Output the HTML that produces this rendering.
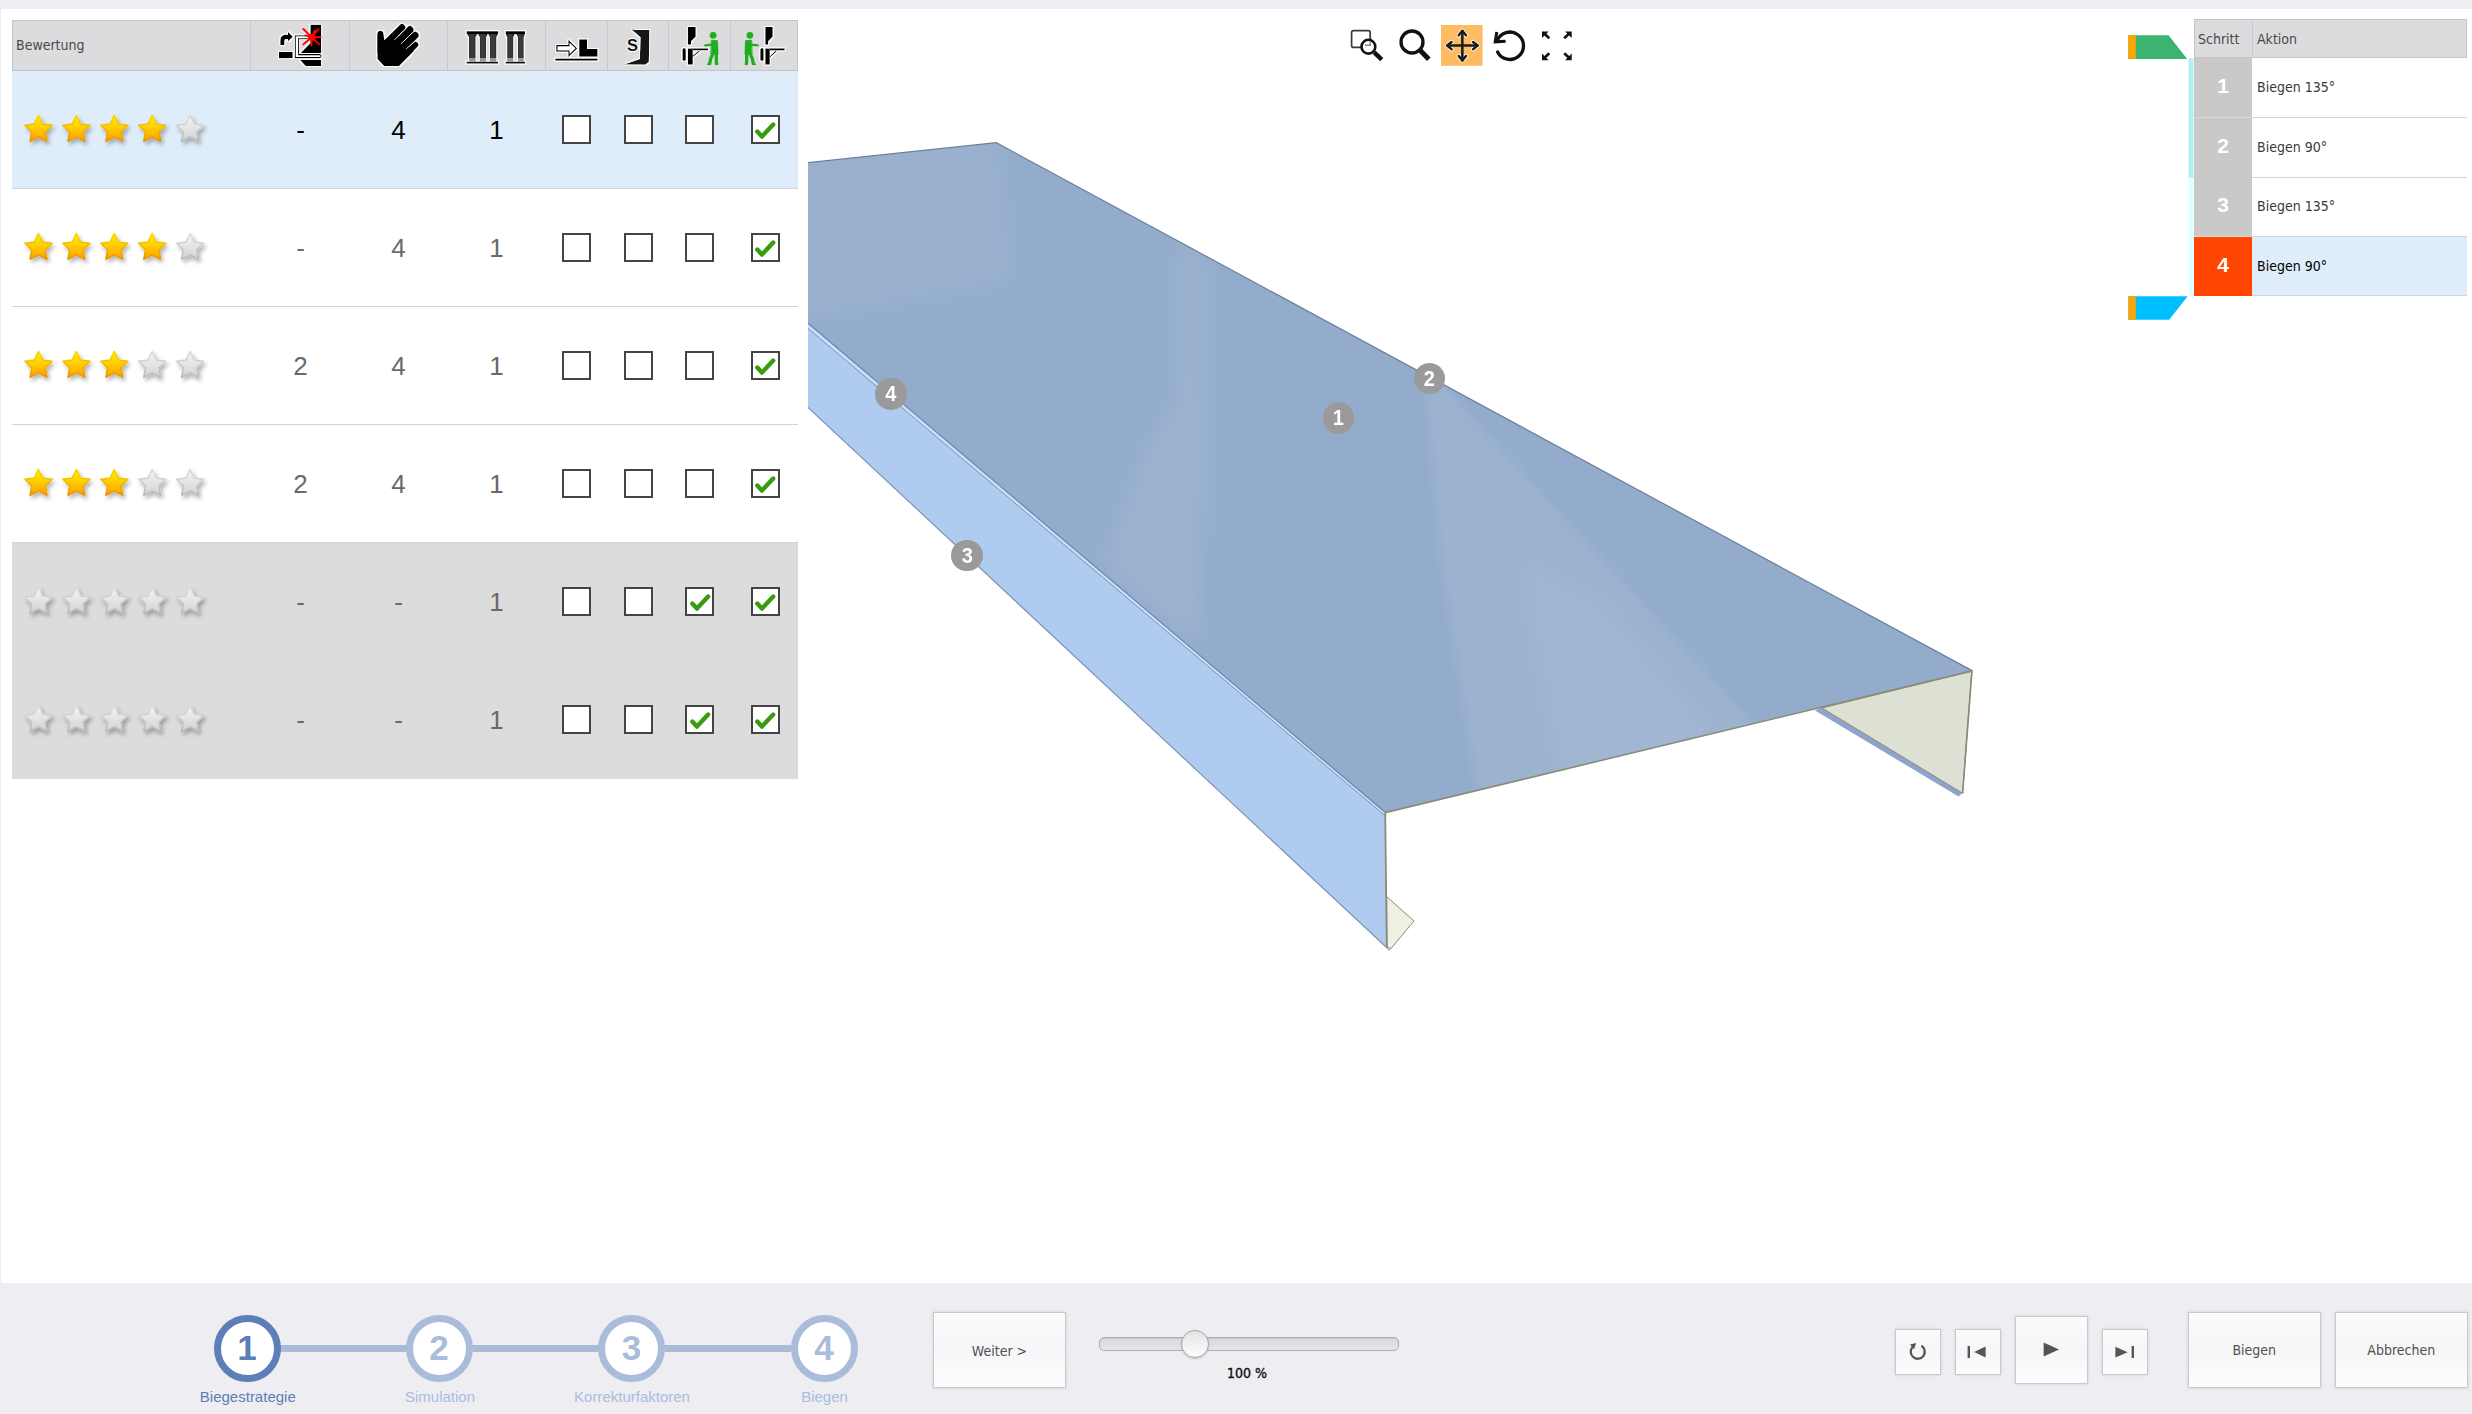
<!DOCTYPE html>
<html lang="de">
<head>
<meta charset="utf-8">
<title>Biegestrategie</title>
<style>
*{box-sizing:border-box;margin:0;padding:0}
html,body{width:2472px;height:1414px;overflow:hidden;background:#fff}
body{position:relative;font-family:"Liberation Sans","DejaVu Sans",sans-serif;color:#333}
.abs{position:absolute}
.tah{font-family:"DejaVu Sans Condensed","Liberation Sans",sans-serif}
#topbar{left:0;top:0;width:2472px;height:9px;background:#ededf2}
#leftstrip{left:0;top:0;width:1px;height:1283px;background:#ededf2}
#bottombar{left:0;top:1283px;width:2472px;height:131px;background:#ededf2}
#thead{left:12px;top:20px;width:786px;height:51px;background:#dcdcde;border:1px solid #c3c3ca}
.vsep{position:absolute;top:0;width:1px;height:49px;background:#c9c9d3}
.row{position:absolute;left:12px;width:786px;height:118px}
.row.sel{background:#dfecfa}
.row.dis{background:#dcdcdc}
.row.line{border-bottom:1px solid #d4d4d8}
.num{position:absolute;top:0;height:118px;line-height:118px;font-size:26px;text-align:center;color:#6a6a6a;width:60px}
.row.sel .num{color:#000}
.cb{position:absolute;top:44px;width:29px;height:29px;border:2.5px solid #444;background:#fff}
.cb svg{position:absolute;left:-2.5px;top:-2.5px}
.stars{position:absolute;left:8px;top:36px}
#shead{left:2194px;top:19px;width:273px;height:39px;background:#dcdcde;border:1px solid #c3c3ca}
.srow{position:absolute;left:2194px;width:273px;height:60px}
.srow .n{position:absolute;left:0;top:0;width:58px;height:60px;background:#c9c9c9;color:#fff;font-weight:bold;font-size:21px;text-align:center;line-height:56px;border-bottom:1px solid #dadada}
.srow .a{position:absolute;left:58px;top:0;width:215px;height:60px;line-height:58px;padding-left:5px;font-size:14px;color:#3a3a3a;border-bottom:1px solid #d4d4d8}
.srow.cur .n{background:#ff4500;border-bottom-color:#ff4500}
.srow.cur .a{background:#dfecfa;color:#000}
.btn{position:absolute;border:1px solid #c9c9ce;background:linear-gradient(#fbfbfc,#f6f6f8 50%,#fdfdfe);box-shadow:0 0 3px rgba(0,0,0,.13);text-align:center;font-size:14px;color:#505050}
.step{position:absolute;top:1315px;width:67px;height:67px;border-radius:50%;border:7px solid #a9bddb;background:#fff;color:#a9bddb;font-weight:bold;font-size:35px;text-align:center;line-height:51px}
.step.act{border-color:#5b7fb6;color:#5b7fb6}
.slabel{position:absolute;top:1388px;width:200px;text-align:center;font-size:15px;color:#a9bddb}
.marker{position:absolute;width:31.6px;height:31.6px;border-radius:50%;background:#9a9a9a;color:#fff;font-weight:bold;font-size:20px;line-height:30.4px;text-align:center}
.marker span{display:inline-block;transform:scaleY(1.14)}
</style>
</head>
<body>
<div id="topbar" class="abs"></div>
<div id="leftstrip" class="abs"></div>
<!-- 3D VIEW -->
<svg class="abs" style="left:808px;top:100px" width="1300" height="900" viewBox="808 100 1300 900">
<defs>
<linearGradient id="gTop" x1="808" y1="0" x2="1972" y2="0" gradientUnits="userSpaceOnUse">
<stop offset="0" stop-color="#97acce"/><stop offset="1" stop-color="#97acce"/>
</linearGradient>
<filter id="blur8" x="-30%" y="-30%" width="160%" height="160%"><feGaussianBlur stdDeviation="13"/></filter>
<filter id="blur6" x="-30%" y="-30%" width="160%" height="160%"><feGaussianBlur stdDeviation="7"/></filter>
<clipPath id="clipTop"><polygon points="808,162.7 996.3,142.7 1972,670.6 1385.1,812.3 808,323.3"/></clipPath>
</defs>
<!-- back lip strip -->
<polygon points="1815,710.5 1824,706.5 1963.5,792 1958.5,796.5" fill="#8ea4c8"/>
<!-- inner right face -->
<polygon points="1822,708 1971.7,671.2 1962.6,793.2" fill="#dde1d3" stroke="#8c8c7c" stroke-width="1"/>
<!-- top face -->
<polygon points="808,162.7 996.3,142.7 1972,670.6 1385.1,812.3 808,323.3" fill="#93accc"/>
<g clip-path="url(#clipTop)" fill="#fff">
<polygon filter="url(#blur8)" points="1178,232 1206,250 1207,450 1202,650 1100,565 1148,440 1176,400" opacity=".085"/>
<polygon filter="url(#blur6)" points="1424,376 1442,384 1765,735 1478,800 1440,560" opacity=".085"/>
<polygon filter="url(#blur8)" points="1520,560 1600,600 1720,740 1560,780" opacity=".05"/>
<polygon filter="url(#blur8)" points="770,130 1000,125 1020,285 770,330" opacity=".06"/>
</g>
<polyline points="808,162.7 996.3,142.7 1972,670.6" fill="none" stroke="#6d7f9c" stroke-width="1.2"/>
<polyline points="1385.1,812.6 1972,670.9 1962.6,793.2" fill="none" stroke="#8a8a78" stroke-width="1.6"/>
<!-- front face -->
<polygon points="808,327.5 1385.3,815.5 1386.6,947.5 808,407.4" fill="#afcbf0"/>
<line x1="808" y1="407.4" x2="1386.6" y2="947.5" stroke="#7d93b6" stroke-width="1.2"/>
<!-- bevel -->
<polygon points="808,323.3 1385.1,812.3 1385.4,816 808,328.4" fill="#c8defa"/>
<line x1="808" y1="323.3" x2="1385.1" y2="812.3" stroke="#6c82a6" stroke-width="1.2"/>
<line x1="808" y1="328.4" x2="1385.4" y2="816" stroke="#7a91b6" stroke-width="1"/>
<!-- inner lip -->
<polygon points="1386.6,896.5 1414,921 1391,948.5 1387,948" fill="#eef0e4" stroke="#8c8c7c" stroke-width="1"/>
<polygon points="1386.6,947 1391,948.5 1389,950.5" fill="#d8dcd0" stroke="#8c8c7c" stroke-width=".8"/>
<line x1="1385.2" y1="813" x2="1386.8" y2="948" stroke="#8a8a76" stroke-width="1.8"/>
</svg>
<div class="marker" style="left:1322.6px;top:402.0px"><span>1</span></div>
<div class="marker" style="left:1413.6px;top:362.7px"><span>2</span></div>
<div class="marker" style="left:951.4px;top:539.5px"><span>3</span></div>
<div class="marker" style="left:875.0px;top:378.4px"><span>4</span></div>
<!-- RATING TABLE -->
<svg width="0" height="0" style="position:absolute"><defs>
<linearGradient id="gy" x1="0" y1="0" x2="0" y2="1"><stop offset="0" stop-color="#fff000"/><stop offset=".45" stop-color="#ffd000"/><stop offset="1" stop-color="#ff9d00"/></linearGradient>
<linearGradient id="gys" x1="0" y1="0" x2="0" y2="1"><stop offset="0" stop-color="#f8dc00"/><stop offset="1" stop-color="#e79300"/></linearGradient>
<linearGradient id="gg" x1="0" y1="0" x2="0" y2="1"><stop offset="0" stop-color="#f6f6f6"/><stop offset="1" stop-color="#d2d2d2"/></linearGradient>
<linearGradient id="ggs" x1="0" y1="0" x2="0" y2="1"><stop offset="0" stop-color="#dedede"/><stop offset="1" stop-color="#b8b8b8"/></linearGradient>
<filter id="sh" x="-30%" y="-30%" width="170%" height="170%"><feGaussianBlur in="SourceAlpha" stdDeviation="1.9"/><feOffset dx="1.8" dy="2.6"/><feComponentTransfer><feFuncA type="linear" slope=".30"/></feComponentTransfer><feMerge><feMergeNode/><feMergeNode in="SourceGraphic"/></feMerge></filter>
<path id="st" d="M15.00,1.40 L19.17,9.96 L28.60,11.28 L21.75,17.89 L23.41,27.27 L15.00,22.80 L6.59,27.27 L8.25,17.89 L1.40,11.28 L10.83,9.96Z" stroke-width="1.5" stroke-linejoin="round"/>
</defs></svg>
<div id="thead" class="abs">
<div class="abs tah" style="left:3px;top:0;line-height:49px;font-size:14px;color:#4a4a4a">Bewertung</div>
<div class="vsep" style="left:237px"></div>
<div class="vsep" style="left:336px"></div>
<div class="vsep" style="left:434px"></div>
<div class="vsep" style="left:532px"></div>
<div class="vsep" style="left:594px"></div>
<div class="vsep" style="left:655px"></div>
<div class="vsep" style="left:717px"></div>
<!--ICONS-->
</div>
<div class="row sel line" style="top:71px">
<svg class="stars" width="200" height="44" viewBox="0 0 200 44"><g filter="url(#sh)"><use href="#st" x="3.5" y="7" fill="url(#gy)" stroke="url(#gys)"/><use href="#st" x="41.4" y="7" fill="url(#gy)" stroke="url(#gys)"/><use href="#st" x="79.3" y="7" fill="url(#gy)" stroke="url(#gys)"/><use href="#st" x="117.2" y="7" fill="url(#gy)" stroke="url(#gys)"/><use href="#st" x="155.1" y="7" fill="url(#gg)" stroke="url(#ggs)"/></g></svg>
<div class="num" style="left:258.5px">-</div>
<div class="num" style="left:356.5px">4</div>
<div class="num" style="left:454.5px">1</div>
<div class="cb" style="left:550.0px"></div>
<div class="cb" style="left:612.0px"></div>
<div class="cb" style="left:673.0px"></div>
<div class="cb" style="left:738.5px"><svg width="29" height="29"><path d="M7.3,16.6 L11.9,21.6 L23.2,9.6" fill="none" stroke="#389b10" stroke-width="4.4" stroke-linecap="round" stroke-linejoin="round"/></svg></div>
</div>
<div class="row line" style="top:189px">
<svg class="stars" width="200" height="44" viewBox="0 0 200 44"><g filter="url(#sh)"><use href="#st" x="3.5" y="7" fill="url(#gy)" stroke="url(#gys)"/><use href="#st" x="41.4" y="7" fill="url(#gy)" stroke="url(#gys)"/><use href="#st" x="79.3" y="7" fill="url(#gy)" stroke="url(#gys)"/><use href="#st" x="117.2" y="7" fill="url(#gy)" stroke="url(#gys)"/><use href="#st" x="155.1" y="7" fill="url(#gg)" stroke="url(#ggs)"/></g></svg>
<div class="num" style="left:258.5px">-</div>
<div class="num" style="left:356.5px">4</div>
<div class="num" style="left:454.5px">1</div>
<div class="cb" style="left:550.0px"></div>
<div class="cb" style="left:612.0px"></div>
<div class="cb" style="left:673.0px"></div>
<div class="cb" style="left:738.5px"><svg width="29" height="29"><path d="M7.3,16.6 L11.9,21.6 L23.2,9.6" fill="none" stroke="#389b10" stroke-width="4.4" stroke-linecap="round" stroke-linejoin="round"/></svg></div>
</div>
<div class="row line" style="top:307px">
<svg class="stars" width="200" height="44" viewBox="0 0 200 44"><g filter="url(#sh)"><use href="#st" x="3.5" y="7" fill="url(#gy)" stroke="url(#gys)"/><use href="#st" x="41.4" y="7" fill="url(#gy)" stroke="url(#gys)"/><use href="#st" x="79.3" y="7" fill="url(#gy)" stroke="url(#gys)"/><use href="#st" x="117.2" y="7" fill="url(#gg)" stroke="url(#ggs)"/><use href="#st" x="155.1" y="7" fill="url(#gg)" stroke="url(#ggs)"/></g></svg>
<div class="num" style="left:258.5px">2</div>
<div class="num" style="left:356.5px">4</div>
<div class="num" style="left:454.5px">1</div>
<div class="cb" style="left:550.0px"></div>
<div class="cb" style="left:612.0px"></div>
<div class="cb" style="left:673.0px"></div>
<div class="cb" style="left:738.5px"><svg width="29" height="29"><path d="M7.3,16.6 L11.9,21.6 L23.2,9.6" fill="none" stroke="#389b10" stroke-width="4.4" stroke-linecap="round" stroke-linejoin="round"/></svg></div>
</div>
<div class="row line" style="top:425px">
<svg class="stars" width="200" height="44" viewBox="0 0 200 44"><g filter="url(#sh)"><use href="#st" x="3.5" y="7" fill="url(#gy)" stroke="url(#gys)"/><use href="#st" x="41.4" y="7" fill="url(#gy)" stroke="url(#gys)"/><use href="#st" x="79.3" y="7" fill="url(#gy)" stroke="url(#gys)"/><use href="#st" x="117.2" y="7" fill="url(#gg)" stroke="url(#ggs)"/><use href="#st" x="155.1" y="7" fill="url(#gg)" stroke="url(#ggs)"/></g></svg>
<div class="num" style="left:258.5px">2</div>
<div class="num" style="left:356.5px">4</div>
<div class="num" style="left:454.5px">1</div>
<div class="cb" style="left:550.0px"></div>
<div class="cb" style="left:612.0px"></div>
<div class="cb" style="left:673.0px"></div>
<div class="cb" style="left:738.5px"><svg width="29" height="29"><path d="M7.3,16.6 L11.9,21.6 L23.2,9.6" fill="none" stroke="#389b10" stroke-width="4.4" stroke-linecap="round" stroke-linejoin="round"/></svg></div>
</div>
<div class="row dis" style="top:543px">
<svg class="stars" width="200" height="44" viewBox="0 0 200 44"><g filter="url(#sh)"><use href="#st" x="3.5" y="7" fill="url(#gg)" stroke="url(#ggs)"/><use href="#st" x="41.4" y="7" fill="url(#gg)" stroke="url(#ggs)"/><use href="#st" x="79.3" y="7" fill="url(#gg)" stroke="url(#ggs)"/><use href="#st" x="117.2" y="7" fill="url(#gg)" stroke="url(#ggs)"/><use href="#st" x="155.1" y="7" fill="url(#gg)" stroke="url(#ggs)"/></g></svg>
<div class="num" style="left:258.5px">-</div>
<div class="num" style="left:356.5px">-</div>
<div class="num" style="left:454.5px">1</div>
<div class="cb" style="left:550.0px"></div>
<div class="cb" style="left:612.0px"></div>
<div class="cb" style="left:673.0px"><svg width="29" height="29"><path d="M7.3,16.6 L11.9,21.6 L23.2,9.6" fill="none" stroke="#389b10" stroke-width="4.4" stroke-linecap="round" stroke-linejoin="round"/></svg></div>
<div class="cb" style="left:738.5px"><svg width="29" height="29"><path d="M7.3,16.6 L11.9,21.6 L23.2,9.6" fill="none" stroke="#389b10" stroke-width="4.4" stroke-linecap="round" stroke-linejoin="round"/></svg></div>
</div>
<div class="row dis" style="top:661px">
<svg class="stars" width="200" height="44" viewBox="0 0 200 44"><g filter="url(#sh)"><use href="#st" x="3.5" y="7" fill="url(#gg)" stroke="url(#ggs)"/><use href="#st" x="41.4" y="7" fill="url(#gg)" stroke="url(#ggs)"/><use href="#st" x="79.3" y="7" fill="url(#gg)" stroke="url(#ggs)"/><use href="#st" x="117.2" y="7" fill="url(#gg)" stroke="url(#ggs)"/><use href="#st" x="155.1" y="7" fill="url(#gg)" stroke="url(#ggs)"/></g></svg>
<div class="num" style="left:258.5px">-</div>
<div class="num" style="left:356.5px">-</div>
<div class="num" style="left:454.5px">1</div>
<div class="cb" style="left:550.0px"></div>
<div class="cb" style="left:612.0px"></div>
<div class="cb" style="left:673.0px"><svg width="29" height="29"><path d="M7.3,16.6 L11.9,21.6 L23.2,9.6" fill="none" stroke="#389b10" stroke-width="4.4" stroke-linecap="round" stroke-linejoin="round"/></svg></div>
<div class="cb" style="left:738.5px"><svg width="29" height="29"><path d="M7.3,16.6 L11.9,21.6 L23.2,9.6" fill="none" stroke="#389b10" stroke-width="4.4" stroke-linecap="round" stroke-linejoin="round"/></svg></div>
</div>
<!-- HEADER ICONS -->
<svg class="abs" style="left:250px;top:21px" width="547" height="49" viewBox="250 21 547 49">
<defs>
<filter id="glow" x="-10%" y="-10%" width="120%" height="120%"><feMorphology in="SourceAlpha" operator="dilate" radius=".9" result="d"/><feGaussianBlur in="d" stdDeviation=".5" result="b"/><feFlood flood-color="#fff" flood-opacity=".95"/><feComposite in2="b" operator="in"/><feMerge><feMergeNode/><feMergeNode in="SourceGraphic"/></feMerge></filter>
<linearGradient id="pil" x1="0" y1="0" x2="1" y2="0"><stop offset="0" stop-color="#1c1c1c"/><stop offset=".35" stop-color="#3c3c3c"/><stop offset=".7" stop-color="#383838"/><stop offset="1" stop-color="#1a1a1a"/></linearGradient>
</defs>
<!-- A: collision -->
<g filter="url(#glow)">
<polygon points="310.3,24.8 321.1,24.8 321.1,52.9 300.5,52.9 310.3,43" fill="#000"/>
<polygon points="300,60 321.1,60 321.1,66 305.4,66" fill="#000"/>
<rect x="279" y="52" width="13.8" height="6.2" fill="#000"/>
<path d="M280.2,44.9 V40.5 Q280.2,34.7 286,34.7 H288 V31.8 L292.9,36.7 L288,41.6 V38.9 H286.6 Q284.4,38.9 284.4,41.2 V44.9 Z" fill="#000"/>
<path d="M295.3,35.7 H313 Q314.6,35.7 314.6,37.2 Q314.6,38.7 313,38.7 H298.6 V54.6 H319.8 Q321.2,54.6 321.2,56.1 Q321.2,57.6 319.8,57.6 H295.3 Z" fill="#fff" stroke="#000" stroke-width="1.1"/>
</g>
<g stroke="#ff0000" stroke-width="1.9" stroke-linecap="round" fill="#ff0000">
<circle cx="311.8" cy="37.2" r="3.7" stroke="none"/>
<path d="M311.6,37.2 L303.4,29 M311.6,37.2 L318.6,29 M311.6,37.2 L320.6,37 M311.6,37.2 L319.2,44.4 M311.6,37.2 L311.4,45.2 M311.6,37.2 L303.4,44.4 M311.6,37.2 L315,30.6 M311.6,37.2 L305.4,35.4"/>
</g>
<!-- B: hand -->
<g filter="url(#glow)">
<polygon points="377.3,34 377.3,59 384,66 399.2,66 414,51 402,38 392,33 384.3,40.2 383.5,34" fill="#000"/>
<g stroke="#000" stroke-linecap="round" fill="none">
<line x1="380.4" y1="33.8" x2="380.4" y2="52" stroke-width="6.2"/>
<line x1="386" y1="43.4" x2="402" y2="27.4" stroke-width="6.9"/>
<line x1="392" y1="47.7" x2="409.9" y2="29.8" stroke-width="7.5"/>
<line x1="398" y1="52.4" x2="415" y2="35.4" stroke-width="7.5"/>
<line x1="402" y1="58" x2="415.3" y2="44.7" stroke-width="6.2"/>
</g>
</g>
<g stroke="#f2f2f2" stroke-width=".9" stroke-linecap="butt">
<line x1="394.5" y1="39.8" x2="406" y2="28.3"/>
<line x1="400.9" y1="43.9" x2="413.8" y2="31.4"/>
<line x1="406.2" y1="48.8" x2="415.2" y2="41.2"/>
</g>
<!-- C: pillars -->
<g filter="url(#glow)">
<rect x="466.5" y="31.1" width="31.7" height="3.2" fill="#000"/>
<rect x="466.5" y="61.6" width="31.6" height="2.1" fill="#111"/>
<rect x="505.6" y="31.1" width="19.4" height="3.2" fill="#000"/>
<rect x="505.6" y="61.6" width="19.4" height="2.1" fill="#111"/>
<g fill="url(#pil)">
<path d="M467.4,34 H477 Q476.6,36.4 475.7,37 V58 H469 V37 Q467.8,36.4 467.4,34Z"/>
<path d="M478.2,34 H487.6 Q487,36.4 486.1,37 V58 H479.8 V37 Q478.7,36.4 478.2,34Z"/>
<path d="M488.4,34 H497.8 Q497.4,36.4 496.4,37 V58 H489.9 V37 Q488.9,36.4 488.4,34Z"/>
<path d="M505.8,34 H514.6 Q514.2,36.4 513.3,37 V58 H507.1 V37 Q506.2,36.4 505.8,34Z"/>
<path d="M516.6,34 H524.8 Q524.6,36.4 523.8,37 V58 H518 V37 Q517,36.4 516.6,34Z"/>
</g>
<g fill="#9a9a9a">
<rect x="469" y="58" width="6.7" height="3.7"/><rect x="479.8" y="58" width="6.3" height="3.7"/><rect x="489.9" y="58" width="6.5" height="3.7"/>
<rect x="507.1" y="58" width="6.2" height="3.7"/><rect x="518" y="58" width="5.8" height="3.7"/>
</g>
</g>
<!-- D: arrow to L -->
<g filter="url(#glow)">
<path d="M579.1,39.2 H587 V49.1 H597.6 V56.8 H579.1Z" fill="#000"/>
<rect x="555.1" y="58.5" width="42.7" height="2.2" rx=".8" fill="#000"/>
<path d="M556.8,45.6 H568.9 V41 L576.4,48.4 L568.9,55.8 V51.2 H556.8Z" fill="#fff" stroke="#000" stroke-width="1.3" stroke-linejoin="miter"/>
</g>
<!-- E: S bracket -->
<g filter="url(#glow)">
<path d="M632.1,27.4 Q632.4,29.6 634.6,29.9 H649.4 L648.9,62 L645.2,64.7 L624,64.4 L639.8,59 L640.5,37.3 L632.6,30.4Z" fill="#151515"/>
</g>
<text x="632.4" y="51.4" text-anchor="middle" style="font-family:'Liberation Sans',sans-serif;font-weight:700;font-size:16.4px;paint-order:stroke" fill="#111" stroke="#fff" stroke-width="1.8" stroke-linejoin="round">S</text>
<!-- F: press + man -->
<g filter="url(#glow)">
<polygon points="687.9,27.1 695.8,27.1 695.8,36.8 691,41.6 691,44.7 687.9,44.7" fill="#000"/>
<rect x="687.9" y="48.4" width="5" height="16.3" fill="#000"/>
<rect x="682.4" y="48.1" width="3.5" height="12.8" rx="1.6" fill="#000"/>
<rect x="692.5" y="48.3" width="15.6" height="2.1" fill="#000"/>
<line x1="692.9" y1="56.3" x2="699.4" y2="51" stroke="#000" stroke-width="1.1"/>
</g>
<g fill="#1fae1f" stroke="#1fae1f" stroke-linejoin="round" stroke-linecap="round">
<circle cx="713.1" cy="35.3" r="3.35" stroke="none"/>
<polygon points="711.7,40.3 717.5,40.7 718,54.2 711.3,54.2" stroke-width=".9"/>
<polyline points="712.2,44.7 705.3,45.3" fill="none" stroke-width="2.3"/>
<polyline points="712.9,53.6 710.7,58.6 709.7,63.6" fill="none" stroke-width="3.3"/>
<polyline points="709.8,64 707.6,64.2" fill="none" stroke-width="1.5"/>
<polyline points="716.3,53.6 716.4,63.6" fill="none" stroke-width="3.3"/>
<polyline points="716.4,64.1 717.9,64.1" fill="none" stroke-width="1.4"/>
</g>
<!-- G: man + press -->
<g fill="#1fae1f" stroke="#1fae1f" stroke-linejoin="round" stroke-linecap="round">
<circle cx="749.9" cy="35.3" r="3.35" stroke="none"/>
<polygon points="751.3,40.3 745.5,40.7 745.0,54.2 751.7,54.2" stroke-width=".9"/>
<polyline points="750.8,44.7 757.7,45.3" fill="none" stroke-width="2.3"/>
<polyline points="750.1,53.6 752.3,58.6 753.3,63.6" fill="none" stroke-width="3.3"/>
<polyline points="753.2,64 755.4,64.2" fill="none" stroke-width="1.5"/>
<polyline points="746.7,53.6 746.6,63.6" fill="none" stroke-width="3.3"/>
<polyline points="746.6,64.1 745.1,64.1" fill="none" stroke-width="1.4"/>
</g>
<g filter="url(#glow)">
<polygon points="765.2,27.1 772.8,27.1 772.8,36.8 768.1,41.6 768.1,44.7 765.2,44.7" fill="#000"/>
<rect x="765.2" y="48.4" width="4.7" height="16.3" fill="#000"/>
<rect x="760.2" y="48.1" width="3.5" height="12.8" rx="1.6" fill="#000"/>
<rect x="769.5" y="48.3" width="15.4" height="2.1" rx=".8" fill="#000"/>
<line x1="769.9" y1="56.8" x2="776.2" y2="51" stroke="#000" stroke-width="1.1"/>
</g>
</svg>
<!-- TOOLBAR -->
<svg class="abs" style="left:1340px;top:20px" width="240" height="50" viewBox="1340 20 240 50">
<!-- zoom window -->
<rect x="1351.6" y="30.6" width="18.6" height="16.8" rx="2" fill="none" stroke="#3a3a3a" stroke-width="1.7"/>
<circle cx="1368.4" cy="46.7" r="6.9" fill="#fff" stroke="#111" stroke-width="2.6"/>
<path d="M1365,45.2 H1370.2 V41" fill="none" stroke="#8a8a8a" stroke-width="1.5"/>
<line x1="1374.2" y1="52.4" x2="1381.8" y2="59.6" stroke="#111" stroke-width="4.4"/>
<!-- magnifier -->
<circle cx="1412" cy="42" r="11" fill="none" stroke="#111" stroke-width="3.3"/>
<line x1="1420.3" y1="50.6" x2="1428.8" y2="59.2" stroke="#111" stroke-width="5"/>
<!-- move (active) -->
<rect x="1441" y="25" width="41.6" height="40.8" fill="#fdbb62"/>
<g fill="none" stroke="#fff" stroke-width="4.4" stroke-linecap="round" stroke-linejoin="round" opacity=".85">
<path d="M1458.75,35.3 L1462.35,30.9 L1465.9499999999998,35.3 M1458.75,56.0 L1462.35,60.4 L1465.9499999999998,56.0 M1451.5500000000002,41.949999999999996 L1447.15,45.55 L1451.5500000000002,49.15 M1473.1499999999999,41.949999999999996 L1477.55,45.55 L1473.1499999999999,49.15"/>
</g>
<g fill="none" stroke="#1c1c1c" stroke-width="2.5" stroke-linecap="round" stroke-linejoin="round">
<path d="M1462.35,30.9 V60.4 M1447.15,45.55 H1477.55"/>
<path d="M1458.75,35.3 L1462.35,30.9 L1465.9499999999998,35.3 M1458.75,56.0 L1462.35,60.4 L1465.9499999999998,56.0 M1451.5500000000002,41.949999999999996 L1447.15,45.55 L1451.5500000000002,49.15 M1473.1499999999999,41.949999999999996 L1477.55,45.55 L1473.1499999999999,49.15"/>
</g>
<!-- rotate -->
<path d="M1497.6,52 A13.7,13.7 0 1 0 1497.2,40.4" fill="none" stroke="#111" stroke-width="3.3" stroke-linecap="round"/>
<path d="M1496.8,32 L1495.2,41.8 L1505.6,41.2" fill="none" stroke="#111" stroke-width="3" stroke-linejoin="miter"/>
<!-- fullscreen -->
<g stroke="#111" stroke-width="2.6" fill="#111">
<line x1="1549.3" y1="38.3" x2="1544" y2="33.3"/><polygon points="1542,31.4 1548.6,31.4 1542,38" stroke="none"/>
<line x1="1564.2" y1="38.3" x2="1569.6" y2="33.3"/><polygon points="1571.7,31.4 1565.1,31.4 1571.7,38" stroke="none"/>
<line x1="1549.3" y1="53.2" x2="1544" y2="58.3"/><polygon points="1542,60.2 1548.6,60.2 1542,53.6" stroke="none"/>
<line x1="1564.2" y1="53.2" x2="1569.6" y2="58.3"/><polygon points="1571.7,60.2 1565.1,60.2 1571.7,53.6" stroke="none"/>
</g>
</svg>
<!-- STEP PANEL -->
<svg class="abs" style="left:2120px;top:30px" width="80" height="300" viewBox="2120 30 80 300">
<polygon points="2128.4,35.2 2168.6,35.2 2187.2,58.9 2128.4,58.9" fill="#3cb371"/>
<rect x="2128.4" y="35.2" width="7.4" height="23.7" fill="#ffa500"/>
<rect x="2188.5" y="58.5" width="5" height="119.5" fill="#b4eff0"/>
<rect x="2188.5" y="178" width="5" height="118" fill="#e2ffff"/>
<polygon points="2128.4,296.2 2187.6,296.2 2169.2,319.8 2128.4,319.8" fill="#00bfff"/>
<rect x="2128.4" y="296.2" width="7.4" height="23.6" fill="#ffa500"/>
</svg>
<div id="shead" class="abs tah">
  <div class="abs" style="left:3px;top:0;line-height:39px;font-size:14px;color:#4a4a4a">Schritt</div>
  <div class="abs" style="left:57px;top:0;width:1px;height:37px;background:#c9c9d3"></div>
  <div class="abs" style="left:62px;top:0;line-height:39px;font-size:14px;color:#4a4a4a">Aktion</div>
</div>
<div class="srow" style="top:58px"><div class="n">1</div><div class="a tah">Biegen 135°</div></div>
<div class="srow" style="top:118px"><div class="n">2</div><div class="a tah">Biegen 90°</div></div>
<div class="srow" style="top:177px"><div class="n">3</div><div class="a tah">Biegen 135°</div></div>
<div class="srow cur" style="top:237px;height:59px"><div class="n" style="height:59px">4</div><div class="a tah" style="height:59px">Biegen 90°</div></div>
<!-- BOTTOM BAR -->
<div id="bottombar" class="abs"></div>
<div class="abs" style="left:279px;top:1345.2px;width:512px;height:7px;background:#a8bcda"></div>
<div class="step act" style="left:213.5px">1</div>
<div class="step" style="left:405.5px">2</div>
<div class="step" style="left:598px">3</div>
<div class="step" style="left:790.5px">4</div>
<div class="slabel" style="left:147.8px;color:#5b7fb6">Biegestrategie</div>
<div class="slabel" style="left:340px">Simulation</div>
<div class="slabel" style="left:532px">Korrekturfaktoren</div>
<div class="slabel" style="left:724.5px">Biegen</div>
<div class="btn tah" style="left:933px;top:1312px;width:133px;height:76px;line-height:76px">Weiter &gt;</div>
<!-- slider -->
<div class="abs" style="left:1098.5px;top:1336.8px;width:300px;height:14px;border-radius:5px;background:linear-gradient(#d9d9d9,#e6e6e6);border:1.2px solid #adadb3;box-shadow:inset 0 1px 1px rgba(0,0,0,.08)"></div>
<div class="abs" style="left:1180.5px;top:1330px;width:28px;height:28px;border-radius:50%;background:linear-gradient(#e4e4e4,#fdfdfd);border:1.3px solid #a4a4aa;box-shadow:0 1px 2px rgba(0,0,0,.18)"></div>
<div class="abs tah" style="left:1197px;top:1364px;width:100px;text-align:center;font-size:14px;-webkit-text-stroke:.35px #111;color:#111;line-height:18px">100 %</div>
<!-- player buttons -->
<div class="btn" style="left:1895px;top:1329px;width:46px;height:46px">
<svg width="44" height="44" viewBox="0 0 44 44"><path d="M16.6,17 A7,7 0 1 0 25.4,15.8" fill="none" stroke="#555" stroke-width="2.3"/><polygon points="14,14.4 20.2,13 18,19.2" fill="#555"/></svg></div>
<div class="btn" style="left:1955px;top:1329px;width:46px;height:46px">
<svg width="44" height="44" viewBox="0 0 44 44"><rect x="11.6" y="16" width="2.4" height="12" fill="#555"/><polygon points="18.2,22 29.6,16.6 29.6,27.4" fill="#555"/></svg></div>
<div class="btn" style="left:2015px;top:1315.5px;width:72.5px;height:68.5px">
<svg width="70" height="66" viewBox="0 0 70 66"><polygon points="27.6,25.6 43,32.6 27.6,39.6" fill="#555"/></svg></div>
<div class="btn" style="left:2102px;top:1329px;width:46px;height:46px">
<svg width="44" height="44" viewBox="0 0 44 44"><polygon points="12.4,16.8 24.6,22.2 12.4,27.6" fill="#555"/><rect x="28.6" y="16" width="2.4" height="12" fill="#555"/></svg></div>
<div class="btn tah" style="left:2188px;top:1312px;width:132.5px;height:75.5px;line-height:74px">Biegen</div>
<div class="btn tah" style="left:2335px;top:1312px;width:132.5px;height:75.5px;line-height:74px">Abbrechen</div>
</body>
</html>
